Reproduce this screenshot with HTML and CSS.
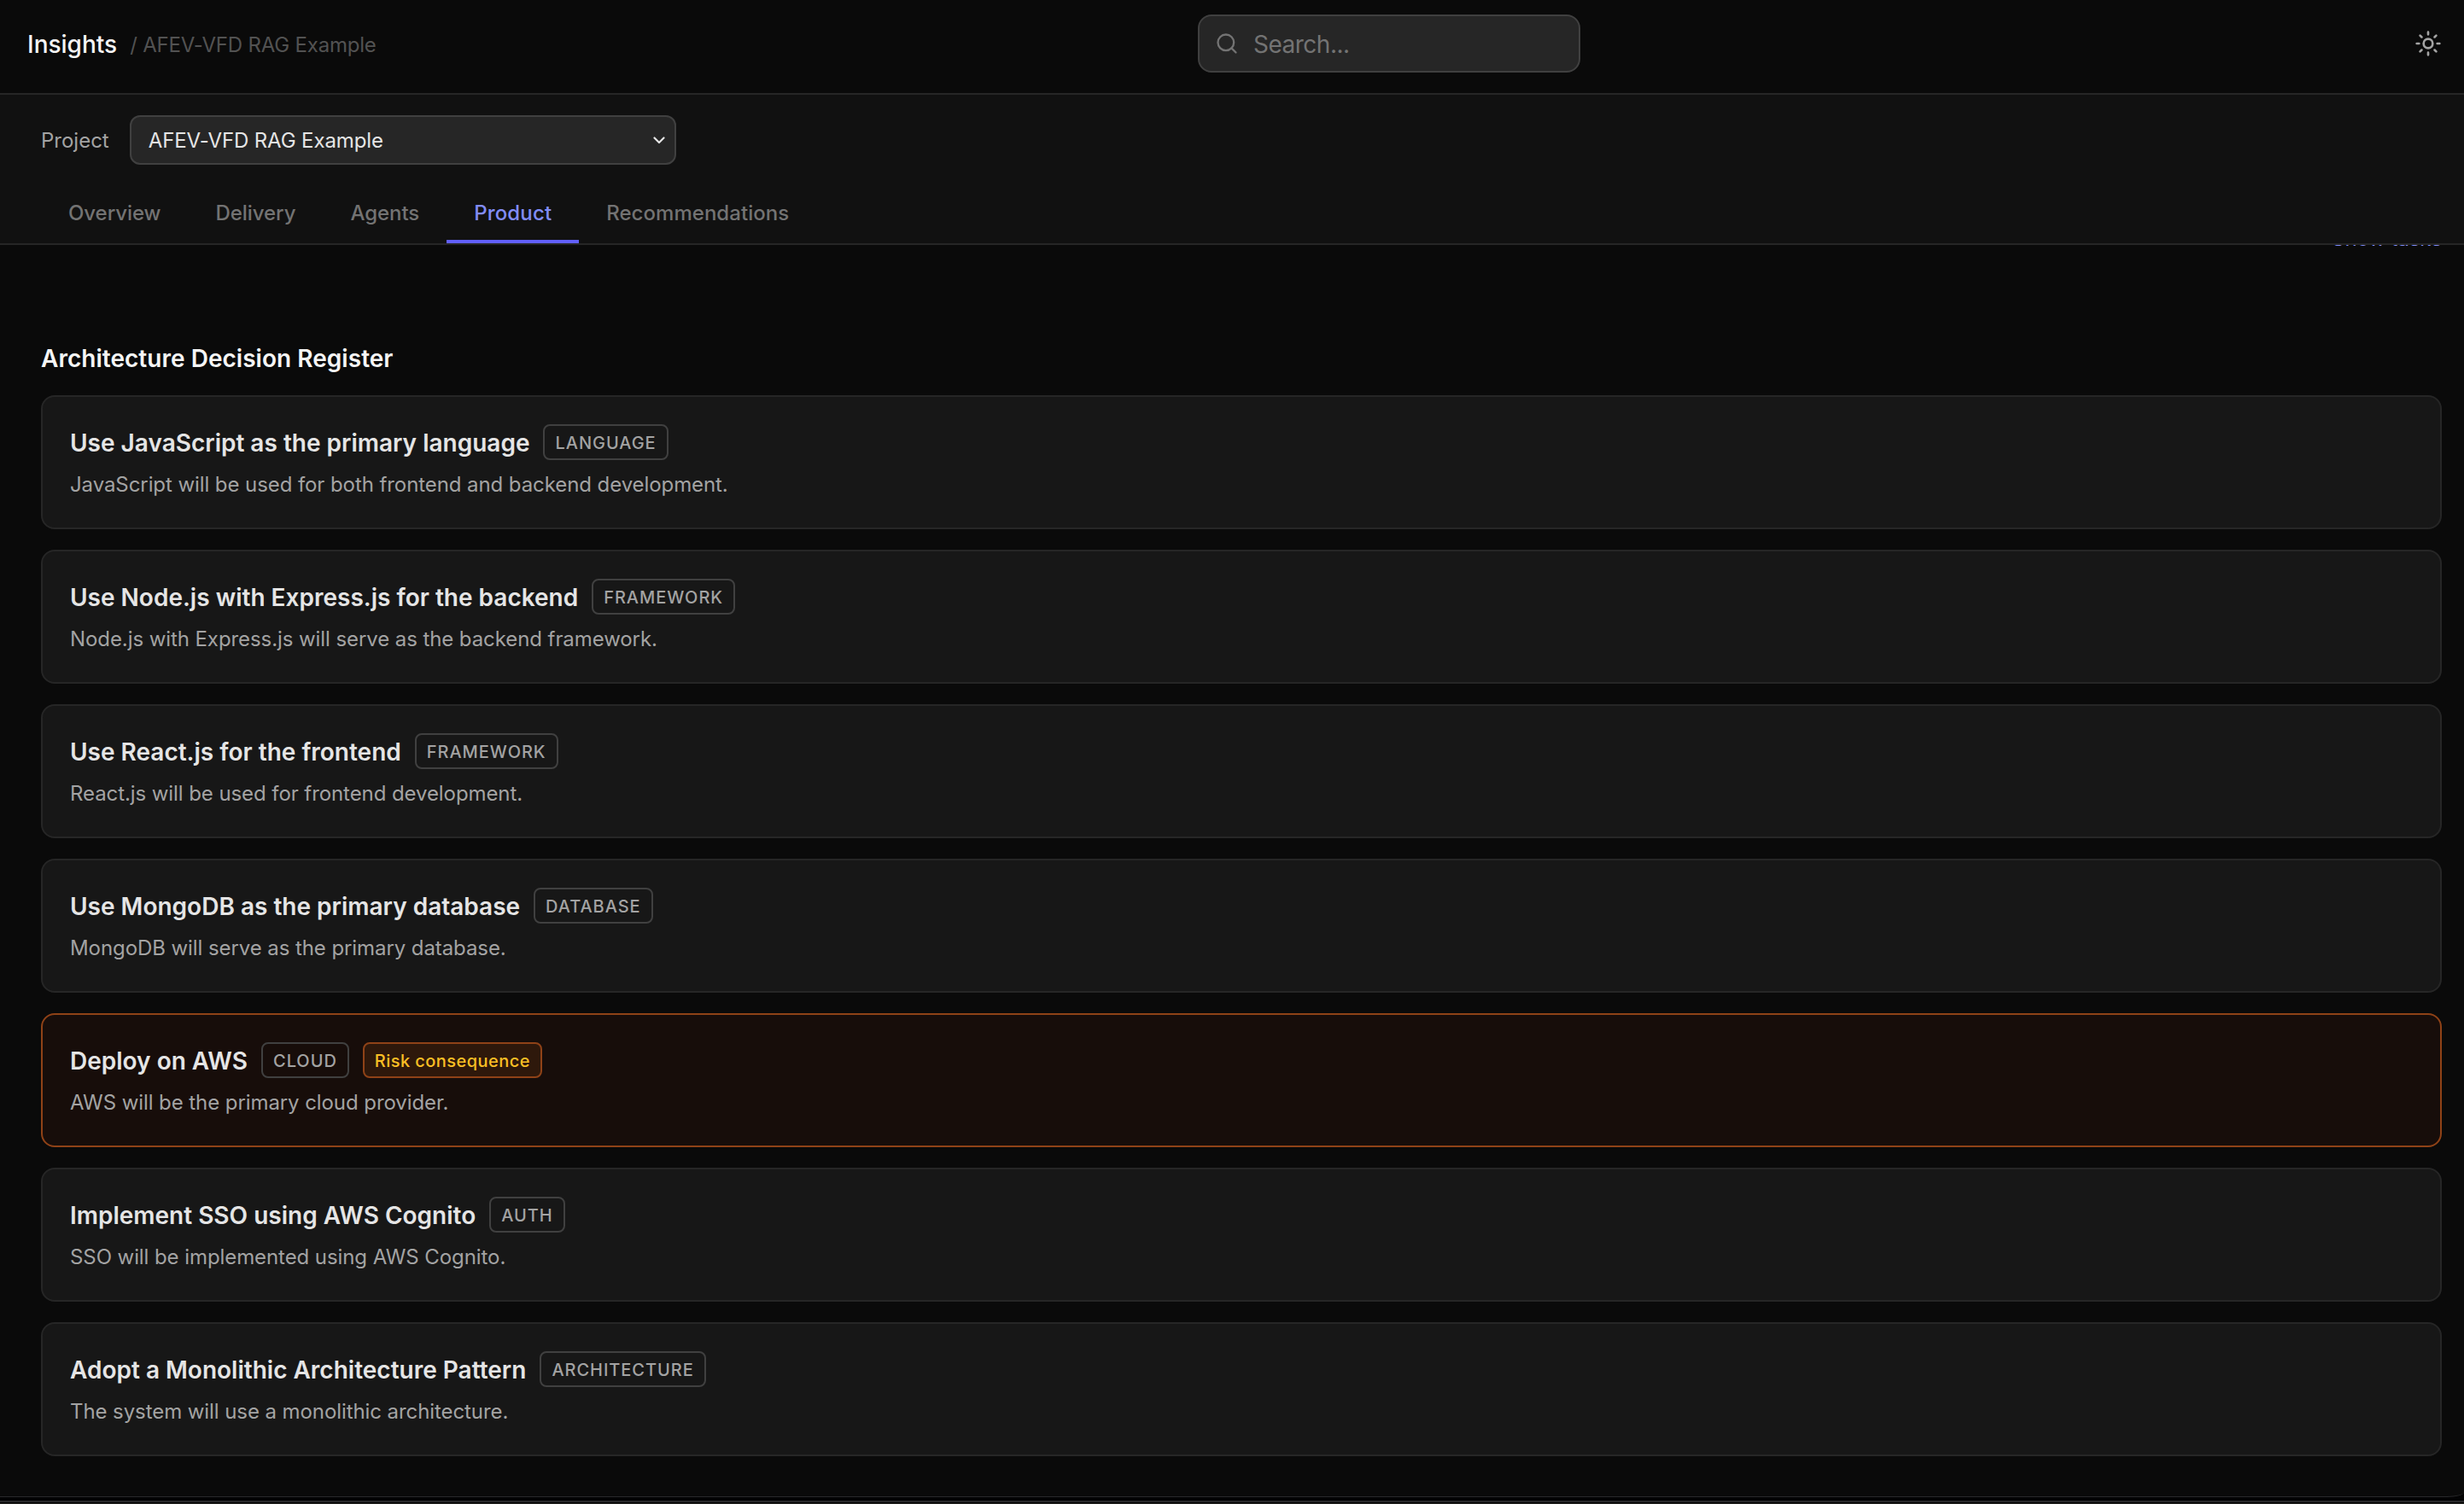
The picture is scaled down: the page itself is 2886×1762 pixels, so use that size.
FILE: index.html
```html
<!DOCTYPE html>
<html lang="en">
<head>
    <meta charset="UTF-8">
    <meta name="viewport" content="width=device-width, initial-scale=1.0">
    <title>Insights</title>
    <link rel="stylesheet" href="styles.css">
</head>
<body>
    <div class="app">
        <header class="topbar">
            <div class="brand">
                <h1 class="brand-title">Insights</h1>
                <span class="crumb">/ AFEV-VFD RAG Example</span>
            </div>
            <label class="search">
                <svg class="search-icon" viewBox="0 0 24 24">
                    <circle cx="11" cy="11" r="8"></circle>
                    <path d="m21 21-4.35-4.35"></path>
                </svg>
                <input class="search-input" type="text" placeholder="Search...">
            </label>
            <button class="theme-btn" aria-label="Toggle theme">
                <svg class="theme-icon" viewBox="0 0 24 24">
                    <circle cx="12" cy="12" r="4"></circle>
                    <path d="M12 2v2M12 20v2M4.93 4.93l1.41 1.41M17.66 17.66l1.41 1.41M2 12h2M20 12h2M6.34 17.66l-1.41 1.41M19.07 4.93l-1.41 1.41"></path>
                </svg>
            </button>
        </header>

        <section class="panel">
            <div class="project-row">
                <span class="project-label">Project</span>
                <div class="select">
                    <span class="select-value">AFEV-VFD RAG Example</span>
                    <svg class="select-arrow" viewBox="0 0 14 9"><path d="M1.5 1.5 7 7l5.5-5.5"></path></svg>
                </div>
            </div>
            <nav class="tabs">
                <a class="tab">Overview</a>
                <a class="tab">Delivery</a>
                <a class="tab">Agents</a>
                <a class="tab active">Product</a>
                <a class="tab">Recommendations</a>
            </nav>
        </section>

        <main class="content">
            <!-- Scrolled mostly under the panel -->
            <div class="tasks-row"><a class="tasks-link">Show tasks</a></div>

            <h2 class="section-title">Architecture Decision Register</h2>
            <div class="cards">
                <article class="card">
                    <div class="card-head"><h3 class="card-title">Use JavaScript as the primary language</h3><span class="tag">LANGUAGE</span></div>
                    <p class="card-text">JavaScript will be used for both frontend and backend development.</p>
                </article>
                <article class="card">
                    <div class="card-head"><h3 class="card-title">Use Node.js with Express.js for the backend</h3><span class="tag">FRAMEWORK</span></div>
                    <p class="card-text">Node.js with Express.js will serve as the backend framework.</p>
                </article>
                <article class="card">
                    <div class="card-head"><h3 class="card-title">Use React.js for the frontend</h3><span class="tag">FRAMEWORK</span></div>
                    <p class="card-text">React.js will be used for frontend development.</p>
                </article>
                <article class="card">
                    <div class="card-head"><h3 class="card-title">Use MongoDB as the primary database</h3><span class="tag">DATABASE</span></div>
                    <p class="card-text">MongoDB will serve as the primary database.</p>
                </article>
                <article class="card card-risk">
                    <div class="card-head"><h3 class="card-title">Deploy on AWS</h3><span class="tag">CLOUD</span><span class="tag tag-risk">Risk consequence</span></div>
                    <p class="card-text">AWS will be the primary cloud provider.</p>
                </article>
                <article class="card">
                    <div class="card-head"><h3 class="card-title">Implement SSO using AWS Cognito</h3><span class="tag">AUTH</span></div>
                    <p class="card-text">SSO will be implemented using AWS Cognito.</p>
                </article>
                <article class="card">
                    <div class="card-head"><h3 class="card-title">Adopt a Monolithic Architecture Pattern</h3><span class="tag">ARCHITECTURE</span></div>
                    <p class="card-text">The system will use a monolithic architecture.</p>
                </article>
            </div>
        </main>
    </div>
    <div class="window-edge"></div>
</body>
</html>
```
FILE: styles.css
```css
* { box-sizing: border-box; margin: 0; padding: 0; }
body { font-family: Inter, sans-serif; background: #030304; color: #e5e5e5; height: 1762px; overflow: hidden; }
svg { fill: none; stroke: currentColor; stroke-linecap: round; stroke-linejoin: round; flex-shrink: 0; }

.app { height: 1754px; background: #0a0a0a; border-bottom: 1px solid #29292b; border-bottom-right-radius: 20px 6px; overflow: hidden; display: flex; flex-direction: column; }
.window-edge { margin-top: 4px; height: 4px; border-top: 2px solid #29292b; border-bottom: 1px solid #242420; }

/* Top bar */
.topbar { height: 111px; flex-shrink: 0; display: grid; grid-template-columns: 1fr 448px 1009px; align-items: start; padding: 17px 26px 0 32px; border-bottom: 2px solid #262626; }
.brand { display: flex; align-items: center; height: 70px; gap: 15px; }
.brand-title { font-size: 28px; font-weight: 500; color: #f5f5f5; }
.crumb { font-size: 24px; color: #525252; letter-spacing: -0.2px; }
.search { height: 68px; display: flex; align-items: center; gap: 17px; padding: 0 18px; background: #262626; border: 2px solid #404040; border-radius: 16px; color: #737373; }
.search-icon { width: 28px; height: 28px; stroke-width: 2; }
.search-input { flex: 1; min-width: 0; padding-top: 2px; background: none; border: 0; outline: 0; font: inherit; font-size: 28px; letter-spacing: -0.5px; color: #e5e5e5; }
.search-input::placeholder { color: #737373; opacity: 1; }
.theme-btn { justify-self: end; height: 68px; display: flex; align-items: center; background: none; border: 0; color: #a3a3a3; }
.theme-icon { width: 32px; height: 32px; stroke-width: 2; }

/* Project picker and tabs */
.panel { height: 176px; flex-shrink: 0; background: #111; border-bottom: 2px solid #262626; padding: 24px 48px 0; display: flex; flex-direction: column; justify-content: space-between; }
.project-row { display: flex; align-items: center; gap: 24px; }
.project-label { font-size: 24px; color: #a3a3a3; }
.select { width: 640px; height: 58px; display: flex; align-items: center; justify-content: space-between; padding: 0 11px 0 20px; background: #262626; border: 2px solid #404040; border-radius: 12px; }
.select-value { font-size: 24px; color: #e5e5e5; letter-spacing: -0.12px; }
.select-arrow { width: 14px; height: 9px; stroke-width: 2.2; }
.tabs { display: flex; }
.tab { height: 70px; line-height: 70px; padding: 0 32px; font-size: 24px; font-weight: 500; letter-spacing: -0.06px; color: #737373; border-bottom: 4px solid transparent; }
.tab.active { color: #818cf8; border-color: #615fff; letter-spacing: 0.15px; }
.tab:last-child { letter-spacing: 0.04px; }

/* Decision list */
.content { flex: 1; min-height: 0; padding: 0 26px 0 48px; overflow: hidden; }
.tasks-row { margin-top: -22px; height: 137px; text-align: right; font-size: 24px; line-height: 30px; letter-spacing: -0.1px; }
.tasks-link { color: #818cf8; }
.section-title { font-size: 28px; line-height: 36px; font-weight: 600; color: #f5f5f5; margin-bottom: 25px; letter-spacing: 0.03px; }
.cards { display: flex; flex-direction: column; gap: 24px; }
.card { height: 157px; padding: 32px; background: #171717; border: 2px solid #262626; border-radius: 16px; }
.card-risk { background: #170d0a; border-color: #8f4217; }
.card-head { display: flex; align-items: center; gap: 16px; height: 42px; }
.card-title { padding-top: 2px; font-size: 28px; font-weight: 600; color: #e5e5e5; }
.tag { height: 42px; line-height: 40px; padding: 0 12px; font-size: 20px; font-weight: 500; letter-spacing: 0.96px; color: #a3a3a3; border: 2px solid #404040; border-radius: 8px; }
.tag-risk { color: #fbbf24; background: #2e180b; border-color: #8f4217; letter-spacing: 0.45px; }
.card-text { margin-top: 11px; font-size: 24px; line-height: 36px; letter-spacing: -0.08px; color: #a3a3a3; }
```
